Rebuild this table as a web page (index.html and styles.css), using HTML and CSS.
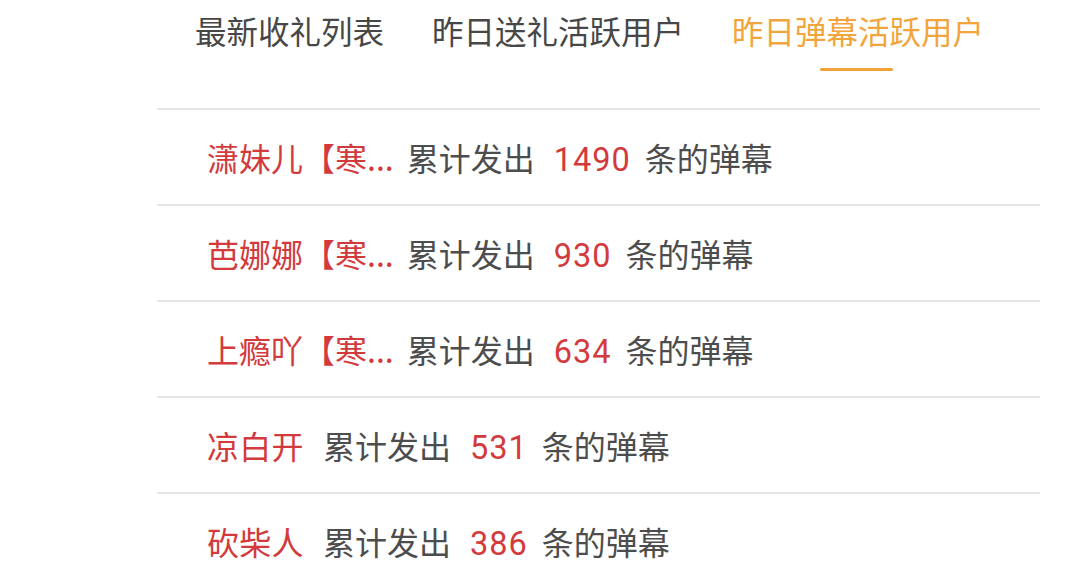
FILE: index.html
```html
<!DOCTYPE html>
<html lang="zh-CN">
<head>
<meta charset="utf-8">
<title>昨日弹幕活跃用户</title>
<link rel="stylesheet" href="styles.css">
</head>
<body>
<div class="panel">
  <nav class="tabs">
    <div class="tab">最新收礼列表</div>
    <div class="tab">昨日送礼活跃用户</div>
    <div class="tab active">昨日弹幕活跃用户</div>
  </nav>
  <ul class="list">
    <li class="row"><span class="name cut">潇妹儿【寒...</span><span class="text">累计发出</span><span class="num">1490</span><span class="text">条的弹幕</span></li>
    <li class="row"><span class="name cut">芭娜娜【寒...</span><span class="text">累计发出</span><span class="num">930</span><span class="text">条的弹幕</span></li>
    <li class="row"><span class="name cut">上瘾吖【寒...</span><span class="text">累计发出</span><span class="num">634</span><span class="text">条的弹幕</span></li>
    <li class="row"><span class="name">凉白开</span><span class="text">累计发出</span><span class="num">531</span><span class="text">条的弹幕</span></li>
    <li class="row"><span class="name">砍柴人</span><span class="text">累计发出</span><span class="num">386</span><span class="text">条的弹幕</span></li>
  </ul>
</div>
</body>
</html>
```

FILE: styles.css
```css
* {
  box-sizing: border-box;
}

html, body {
  margin: 0;
  padding: 0;
  background: #ffffff;
}

body {
  font-family: "Noto Sans CJK SC", "Noto Sans", sans-serif;
  width: 1080px;
  height: 585px;
  overflow: hidden;
}

.panel {
  margin-left: 157px;
  width: 883px;
}

.tabs {
  display: flex;
  gap: 48px;
  height: 110px;
  padding-left: 38px;
  border-bottom: 2px solid #e6e6e6;
}

.tab {
  display: flex;
  flex-direction: column;
  align-items: center;
  padding-top: 10px;
  font-size: 31.5px;
  line-height: 40px;
  color: #474747;
  white-space: nowrap;
}

.tab.active {
  color: #f2a53c;
}

.tab.active::after {
  content: "";
  display: block;
  width: 73px;
  height: 3px;
  margin-top: 18px;
  margin-left: -3px;
  background: #f0a236;
  border-radius: 2px;
}

.list {
  list-style: none;
  margin: 0;
  padding: 0;
}

.row {
  height: 96px;
  padding-left: 50px;
  padding-top: 1px;
  border-bottom: 2px solid #e6e6e6;
  font-size: 32px;
  line-height: 93px;
  white-space: nowrap;
}

.name {
  color: #d33a3c;
  letter-spacing: 0.3px;
}

.name.cut {
  letter-spacing: 0;
}

.text {
  color: #4d4d4d;
  margin-left: 19px;
}

.name.cut + .text {
  margin-left: 13px;
}

.num {
  color: #d33a3c;
  font-family: Roboto, "Noto Sans", sans-serif;
  font-size: 32.5px;
  letter-spacing: 1px;
  margin-left: 19px;
}

.num + .text {
  margin-left: 14px;
}
```
